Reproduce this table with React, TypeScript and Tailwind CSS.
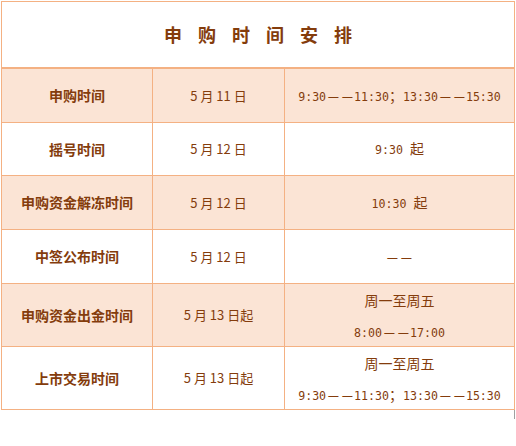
import React from "react";

type Row = {
  label: string;
  date: string;
  time: string;
  days?: string;
  shaded: boolean;
  h: string;
};

const rows: Row[] = [
  { label: "申购时间", date: "5 月 11 日", time: "9:30——11:30；13:30——15:30", shaded: true, h: "h-[54px]" },
  { label: "摇号时间", date: "5 月 12 日", time: "9:30 起", shaded: false, h: "h-[53px]" },
  { label: "申购资金解冻时间", date: "5 月 12 日", time: "10:30 起", shaded: true, h: "h-[54px]" },
  { label: "中签公布时间", date: "5 月 12 日", time: "——", shaded: false, h: "h-[54px]" },
  { label: "申购资金出金时间", date: "5 月 13 日起", days: "周一至周五", time: "8:00——17:00", shaded: true, h: "h-[63px]" },
  { label: "上市交易时间", date: "5 月 13 日起", days: "周一至周五", time: "9:30——11:30；13:30——15:30", shaded: false, h: "h-[62px]" },
];

const cjk = "font-['Noto_Sans_CJK_SC',sans-serif]";
const mono = "font-['DejaVu_Sans_Mono','Noto_Sans_CJK_SC',monospace]";

// digits in a half-width mono face, full-width marks and CJK in the CJK face
function TimeText({ text }: { text: string }) {
  const parts = text.split(/([^\x00-\x7f])/).filter((p) => p !== "");
  return (
    <div className={`whitespace-pre text-[11.6px] leading-[18px] ${mono}`}>
      {parts.map((p, i) => {
        if (/[\x00-\x7f]/.test(p[0])) return <span key={i}>{p}</span>;
        if (p === "—")
          return (
            <span key={i} className={`inline-block w-[14px] text-center text-[14px] ${cjk}`}>
              <span className="inline-block scale-x-[0.9]">—</span>
            </span>
          );
        return (
          <span key={i} className={`text-[14px] ${cjk}`}>
            {p}
          </span>
        );
      })}
    </div>
  );
}

export default function App() {
  return (
    <div className="min-h-[446px] w-[516px] bg-white pt-px">
      <div className="ml-px w-[514px] border border-[#f4b183] text-[#843c0c]">
        <div className={`flex h-[67px] items-center justify-center border-b-2 border-[#f4b183] pl-[16px] text-[18px] font-bold tracking-[16px] ${cjk}`}>
          申购时间安排
        </div>
        {rows.map((r, i) => (
          <div
            key={r.label}
            className={`flex ${r.h} ${i < rows.length - 1 ? "border-b border-[#f4b183]" : ""} ${r.shaded ? "bg-[#fbe4d5]" : "bg-white"}`}
          >
            <div className={`flex w-[151px] items-center justify-center border-r border-[#f4b183] text-[14px] font-bold ${cjk}`}>
              {r.label}
            </div>
            <div className={`flex w-[132px] items-center justify-center border-r border-[#f4b183] text-[13px] ${cjk}`}>
              {r.date}
            </div>
            <div className="flex flex-1 flex-col items-center justify-center">
              {r.days && <div className={`mb-[11px] text-[14px] leading-[22px] ${cjk}`}>{r.days}</div>}
              <TimeText text={r.time} />
            </div>
          </div>
        ))}
      </div>
      <div className="ml-[514px] h-[9px] w-px bg-[#a0a0a0]" />
    </div>
  );
}
